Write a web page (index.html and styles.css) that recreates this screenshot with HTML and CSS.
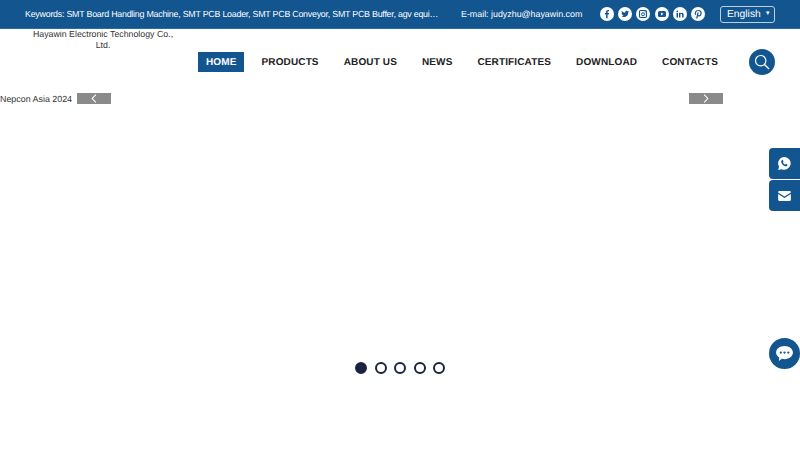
FILE: index.html
```html
<!DOCTYPE html>
<html lang="en">
<head>
<meta charset="utf-8">
<title>Hayawin Electronic Technology Co., Ltd.</title>
<link rel="stylesheet" href="styles.css">
</head>
<body>
<div class="topbar">
  <div class="keywords">Keywords: SMT Board Handling Machine, SMT PCB Loader, SMT PCB Conveyor, SMT PCB Buffer, agv equipment</div>
  <div class="email">E-mail: judyzhu@hayawin.com</div>
  <div class="social">
    <svg class="soc" viewBox="0 0 14 14"><circle cx="7" cy="7" r="7" fill="#fff"/><path fill="#12558f" d="M7.6 11.2V7.4h1.2l.2-1.5H7.6V5c0-.4.1-.7.7-.7H9V3c-.2 0-.6-.1-1-.1-1.100 0-1.900.7-1.900 1.900v1.100H4.900v1.500h1.200v3.800z"/></svg>
    <svg class="soc" viewBox="0 0 14 14"><circle cx="7" cy="7" r="7" fill="#fff"/><path fill="#12558f" d="M11 4.500c-.3.100-.6.200-.9.250.3-.2.600-.5.700-.9-.3.200-.6.300-1 .4a1.600 1.600 0 0 0-2.700 1.450A4.500 4.500 0 0 1 3.800 4c-.4.700-.2 1.600.5 2.100-.3 0-.5-.1-.7-.2 0 .8.500 1.400 1.300 1.600-.2.100-.5.100-.7 0 .2.600.8 1.100 1.500 1.100-.7.600-1.500.8-2.400.7a4.500 4.500 0 0 0 7-4c.3-.2.500-.5.700-.8z"/></svg>
    <svg class="soc" viewBox="0 0 14 14"><circle cx="7" cy="7" r="7" fill="#fff"/><rect x="3.500" y="3.500" width="7" height="7" rx="1.200" fill="none" stroke="#12558f" stroke-width="1.100"/><circle cx="7" cy="7.300" r="1.500" fill="none" stroke="#12558f" stroke-width="1"/><rect x="8.600" y="4.400" width="1.100" height="1.100" fill="#12558f"/></svg>
    <svg class="soc" viewBox="0 0 14 14"><circle cx="7" cy="7" r="7" fill="#fff"/><rect x="3" y="4" width="8" height="6" rx="1.600" fill="#12558f"/><path fill="#fff" d="M6 5.500v3L8.500 7z"/></svg>
    <svg class="soc" viewBox="0 0 14 14"><circle cx="7" cy="7" r="7" fill="#fff"/><path fill="#12558f" d="M3.500 5.800h1.500v4.700H3.500zM4.250 3.400a.85.85 0 1 1 0 1.700.85.85 0 0 1 0-1.700zM6 5.800h1.400v.65c.3-.45.800-.8 1.500-.8 1.300 0 1.700.85 1.700 2.100v2.750H9.100V8c0-.6-.1-1.100-.8-1.100-.7 0-.9.500-.9 1.100v2.500H6z"/></svg>
    <svg class="soc" viewBox="0 0 14 14"><circle cx="7" cy="7" r="7" fill="#fff"/><path fill="none" stroke="#12558f" stroke-width="1.200" d="M4.600 7.800C3.700 6 4.800 3.500 7.300 3.500c2 0 3 1.400 2.800 3-.2 1.600-1.100 2.500-2.200 2.400-.8-.1-1.200-.6-1.300-1.100M7.100 5.500 5.700 11.500"/></svg>
  </div>
  <div class="lang">English <span class="caret">▼</span></div>
</div>

<header class="header">
  <div class="logo">Hayawin Electronic Technology Co., Ltd.</div>
  <nav class="nav">
    <a class="nav-item active">HOME</a>
    <a class="nav-item">PRODUCTS</a>
    <a class="nav-item">ABOUT US</a>
    <a class="nav-item">NEWS</a>
    <a class="nav-item">CERTIFICATES</a>
    <a class="nav-item">DOWNLOAD</a>
    <a class="nav-item">CONTACTS</a>
  </nav>
  <div class="search">
    <svg viewBox="0 0 16 16" width="16" height="16"><circle cx="6.700" cy="6.700" r="5.200" fill="none" stroke="#fff" stroke-width="1.200"/><path d="M10.500 10.500 15 15" stroke="#fff" stroke-width="1.400" fill="none"/></svg>
  </div>
</header>

<section class="slider">
  <div class="slide-row">
    <span class="slide-title">Nepcon Asia 2024</span>
    <button class="arrow"><svg viewBox="0 0 6 10" width="6" height="9"><path d="M5 .8 1 5l4 4.200" fill="none" stroke="#fff" stroke-width="1.200"/></svg></button>
    <button class="arrow arrow-next"><svg viewBox="0 0 6 10" width="6" height="9"><path d="M1 .8 5 5 1 9.200" fill="none" stroke="#fff" stroke-width="1.200"/></svg></button>
  </div>
  <div class="dots">
    <span class="dot on"></span><span class="dot"></span><span class="dot"></span><span class="dot"></span><span class="dot"></span>
  </div>
</section>

<aside class="side">
  <div class="side-btn"><svg viewBox="0 0 16 16" width="15" height="15"><path fill="#fff" d="M8 1a6.800 6.800 0 0 0-5.800 10.300L1.200 15l3.800-1A6.800 6.800 0 1 0 8 1z"/><path fill="#12558f" d="M5.700 4.300c.3 0 .5 0 .6.300l.6 1.300c0 .2 0 .4-.1.500l-.5.600c.5 1 1.300 1.700 2.300 2.200l.6-.7c.2-.2.300-.2.500-.1l1.300.6c.2.100.3.300.2.600-.2.900-1 1.400-1.900 1.300C7 10.700 4.800 8.500 4.500 6c0-.8.400-1.500 1.200-1.700z"/></svg></div>
  <div class="side-btn"><svg viewBox="0 0 14 11" width="13" height="10"><path fill="#fff" d="M0 1.300C0 .6.600 0 1.300 0h11.400c.7 0 1.300.6 1.300 1.300v.4L7 6 0 1.700z"/><path fill="#fff" d="M0 3.300 7 7.600l7-4.300v6.400c0 .7-.6 1.300-1.300 1.300H1.300C.6 11 0 10.400 0 9.700z"/></svg></div>
</aside>

<div class="chat">
  <svg viewBox="0 0 18 16" width="17" height="15"><path fill="#fff" d="M9 0c5 0 9 3 9 7s-4 7-9 7c-1 0-2-.1-2.800-.4L3 16l.4-3.700C1.300 11 0 9.100 0 7c0-4 4-7 9-7z"/><circle cx="5" cy="7" r="1.200" fill="#12558f"/><circle cx="9" cy="7" r="1.200" fill="#12558f"/><circle cx="13" cy="7" r="1.200" fill="#12558f"/></svg>
</div>
</body>
</html>
```

FILE: styles.css
```css
* { box-sizing: border-box; }
html, body { margin: 0; padding: 0; }
body {
  width: 800px;
  height: 450px;
  overflow: hidden;
  background: #fff;
  font-family: "Liberation Sans", Arial, sans-serif;
  color: #333;
  position: relative;
  text-rendering: geometricPrecision;
}
.topbar {
  height: 29px;
  background: #12558f;
  border-bottom: 1px solid #2a6a9f;
  display: flex;
  align-items: center;
  padding-left: 25px;
  color: #fff;
  font-size: 8.870px;
}
.keywords {
  flex: none;
  width: 414px;
  white-space: nowrap;
  overflow: hidden;
  text-overflow: ellipsis;
  letter-spacing: -0.240px;
}
.email { flex: none; margin-left: 22px; width: 139px; white-space: nowrap; }
.social { flex: none; display: flex; gap: 4.200px; width: 120px; }
.soc { flex: none; width: 14px; height: 14px; }
.lang {
  flex: none;
  width: 55px;
  height: 17px;
  border: 1px solid #bcd0e2;
  border-radius: 3px;
  font-size: 10.300px;
  padding-left: 6px;
  line-height: 15px;
  white-space: nowrap;
}
.caret { font-size: 6px; vertical-align: 1.500px; margin-left: 1px; }
.header { height: 61px; display: flex; position: relative; }
.logo {
  flex: none;
  width: 146px;
  margin-left: 30px;
  text-align: center;
  font-size: 8.800px;
  line-height: 10.500px;
  color: #333;
}
.nav {
  flex: none;
  display: flex;
  align-items: flex-start;
  margin-left: 22px;
  margin-top: 23px;
  gap: 9px;
}
.nav-item {
  flex: none;
  height: 20px;
  line-height: 21px;
  padding: 0 8px;
  font-size: 10px;
  font-weight: bold;
  letter-spacing: 0.130px;
  white-space: nowrap;
  color: #222;
}
.nav-item.active { background: #12558f; color: #fff; padding-right: 7.300px; margin-right: 0.700px; }
.search {
  flex: none;
  width: 26px;
  height: 26px;
  border-radius: 50%;
  background: #12558f;
  margin-left: 23px;
  margin-top: 20px;
  display: flex;
  align-items: center;
  justify-content: center;
}
.slider { height: 360px; position: relative; }
.slide-row { display: flex; align-items: center; height: 11px; margin-top: 3px; font-size: 8.900px; }
.slide-title { flex: none; width: 77px; white-space: nowrap; color: #333; }
.arrow {
  flex: none;
  width: 34px;
  height: 11px;
  padding: 0;
  border: 0;
  background: #8a8a8a;
  display: flex;
  align-items: center;
  justify-content: center;
}
.arrow-next { margin-left: 578px; }
.dots {
  position: absolute;
  top: 269px;
  left: 355px;
  display: flex;
  gap: 7.500px;
}
.dot {
  width: 12px;
  height: 12px;
  border-radius: 50%;
  border: 2px solid #1c2340;
  background: #fff;
}
.dot.on { background: #1c2340; }
.side {
  position: absolute;
  right: 0;
  top: 148px;
  display: flex;
  flex-direction: column;
  gap: 1px;
}
.side-btn {
  width: 31px;
  height: 31px;
  background: #12558f;
  border-radius: 4px 0 0 4px;
  display: flex;
  align-items: center;
  justify-content: center;
}
.chat {
  position: absolute;
  left: 769px;
  top: 338px;
  width: 31px;
  height: 31px;
  background: #12558f;
  border-radius: 50%;
  display: flex;
  align-items: center;
  justify-content: center;
}
```
